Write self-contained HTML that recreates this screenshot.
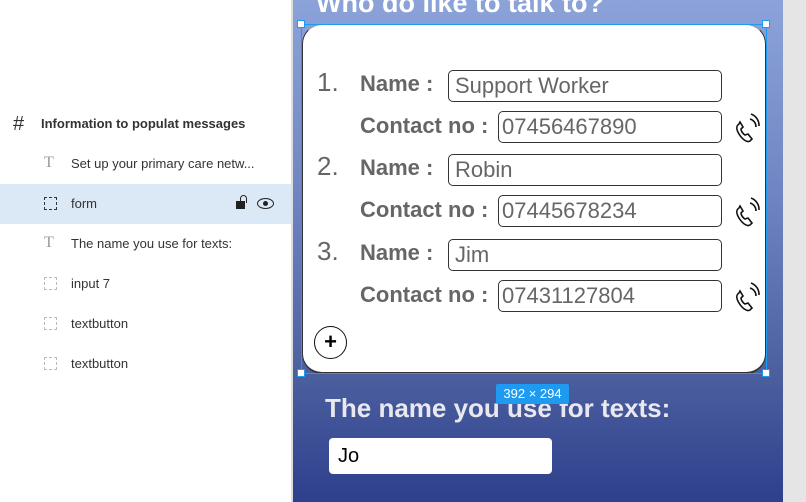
<!DOCTYPE html>
<html><head><style>
*{margin:0;padding:0;box-sizing:border-box}
body{width:806px;height:502px;overflow:hidden;background:#fff;font-family:"Liberation Sans",sans-serif;position:relative}
.l{position:absolute;font-size:13px;color:#333;left:71px}
.ic{position:absolute;left:44px;width:13px;height:13px;border:1px dashed #888}
.frame{position:absolute;left:293px;top:0;width:490px;height:502px;background:linear-gradient(#8ba3d9,#6e84c2 40%,#4b5f9f 75%,#2e3f8c)}
.gray{position:absolute;left:783px;top:0;width:23px;height:502px;background:#e5e5e5}
.card{position:absolute;left:302px;top:24px;width:464px;height:350px;background:#fff;border-radius:20px;border:1px solid #999;border-bottom:2px solid #333;border-left:1px solid #333;border-right:1px solid #333}
.sel{position:absolute;left:301px;top:24px;width:466px;height:350px;border:1px solid #1e9bf0}
.h{position:absolute;width:8px;height:8px;background:#fff;border:1px solid #1e9bf0}
.t{position:absolute;font-weight:bold;color:#666;font-size:22px}
.n{position:absolute;color:#666;font-size:26px;left:317px}
.in{position:absolute;border:1.5px solid #333;border-radius:5px;height:32px;font-size:22px;color:#666;padding-left:6px;line-height:30px}
.ph{position:absolute;left:733px}
</style></head><body>
<div style="position:absolute;left:13px;top:113px;font-size:20px;color:#333">#</div>
<div class="l" style="left:41px;top:116px;font-weight:bold;color:#333">Information to populat messages</div>
<div style="position:absolute;left:44px;top:154px;color:#999;font-family:'Liberation Serif';font-size:16px">T</div>
<div class="l" style="top:156px">Set up your primary care netw...</div>
<div style="position:absolute;left:0;top:184px;width:292px;height:40px;background:#dbe9f6"></div>
<div class="ic" style="top:197px;border-color:#333"></div>
<div class="l" style="top:196px">form</div>
<div style="position:absolute;left:236px;top:201px;width:9px;height:8px;background:#222"></div>
<div style="position:absolute;left:240px;top:195px;width:7px;height:8px;border:1.5px solid #222;border-bottom:none;border-radius:4px 4px 0 0"></div>
<div style="position:absolute;left:257px;top:198px;width:17px;height:11px;border:1.5px solid #222;border-radius:50%"></div>
<div style="position:absolute;left:263px;top:201px;width:5px;height:5px;background:#222;border-radius:50%"></div>
<div style="position:absolute;left:44px;top:234px;color:#999;font-family:'Liberation Serif';font-size:16px">T</div>
<div class="l" style="top:236px">The name you use for texts:</div>
<div class="ic" style="top:277px;border-color:#bbb"></div><div class="l" style="top:276px">input 7</div>
<div class="ic" style="top:317px;border-color:#bbb"></div><div class="l" style="top:316px">textbutton</div>
<div class="ic" style="top:357px;border-color:#bbb"></div><div class="l" style="top:356px">textbutton</div>
<div style="position:absolute;left:291px;top:0;width:2px;height:502px;background:#ddd"></div>
<div class="frame"></div><div class="gray"></div>
<div style="position:absolute;left:316px;top:-12px;color:#fff;font-weight:bold;font-size:27px">Who do like to talk to?</div>
<div class="card"></div><div class="sel"></div>
<div class="h" style="left:297px;top:20px"></div><div class="h" style="left:762px;top:20px"></div>
<div class="h" style="left:297px;top:369px"></div><div class="h" style="left:762px;top:369px"></div>
<div class="n" style="top:67px">1.</div><div class="n" style="top:151px">2.</div><div class="n" style="top:236px">3.</div>
<div class="t" style="left:360px;top:71px">Name :</div>
<div class="t" style="left:360px;top:113px">Contact no :</div>
<div class="t" style="left:360px;top:155px">Name :</div>
<div class="t" style="left:360px;top:197px">Contact no :</div>
<div class="t" style="left:360px;top:240px">Name :</div>
<div class="t" style="left:360px;top:282px">Contact no :</div>
<div class="in" style="left:448px;top:70px;width:274px">Support Worker</div>
<div class="in" style="left:498px;top:111px;width:224px;padding-left:3px">07456467890</div>
<div class="in" style="left:448px;top:154px;width:274px">Robin</div>
<div class="in" style="left:498px;top:195px;width:224px;padding-left:3px">07445678234</div>
<div class="in" style="left:448px;top:239px;width:274px">Jim</div>
<div class="in" style="left:498px;top:280px;width:224px;padding-left:3px">07431127804</div>
<svg class="ph" style="top:110px" width="28" height="34" viewBox="0 0 28 34" fill="none" stroke="#111" stroke-width="1.6"><path d="M6 14c-3 2-3 5 0 10s8 9 11 7l2-2-4-5-3 1c-2-1-4-4-4-6l2-2-3-5z"/><path d="M17 9a8 8 0 0 1 6 8M18 4a12 12 0 0 1 8 12"/></svg>
<svg class="ph" style="top:194px" width="28" height="34" viewBox="0 0 28 34" fill="none" stroke="#111" stroke-width="1.6"><path d="M6 14c-3 2-3 5 0 10s8 9 11 7l2-2-4-5-3 1c-2-1-4-4-4-6l2-2-3-5z"/><path d="M17 9a8 8 0 0 1 6 8M18 4a12 12 0 0 1 8 12"/></svg>
<svg class="ph" style="top:279px" width="28" height="34" viewBox="0 0 28 34" fill="none" stroke="#111" stroke-width="1.6"><path d="M6 14c-3 2-3 5 0 10s8 9 11 7l2-2-4-5-3 1c-2-1-4-4-4-6l2-2-3-5z"/><path d="M17 9a8 8 0 0 1 6 8M18 4a12 12 0 0 1 8 12"/></svg>
<div style="position:absolute;left:314px;top:326px;width:33px;height:33px;border:1.5px solid #111;border-radius:50%;text-align:center;line-height:29px;font-size:22px;font-weight:bold">+</div>
<div style="position:absolute;left:325px;top:393px;color:#e8e8ee;font-weight:bold;font-size:26px">The name you use for texts:</div>
<div style="position:absolute;left:496px;top:384px;width:73px;height:20px;background:#1e9bf0;color:#fff;font-size:13px;text-align:center;line-height:20px;border-radius:2px">392 × 294</div>
<div style="position:absolute;left:329px;top:438px;width:223px;height:36px;background:#fff;border-radius:4px;font-size:20px;line-height:36px;padding-left:9px">Jo</div>
</body></html>
